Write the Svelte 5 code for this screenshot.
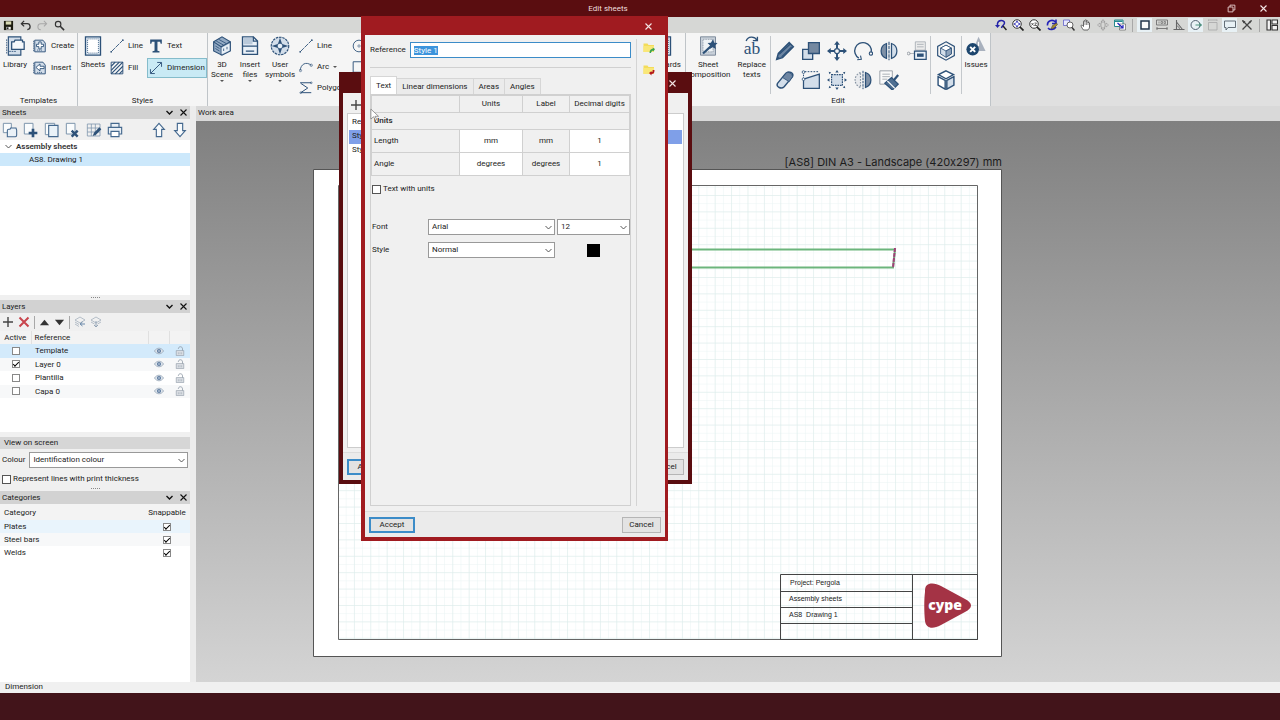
<script>
  import { onMount } from 'svelte';

  const N = '#2d5178';
  const L = '#d3deea';
  const s = (w = 1.6, c = N) => `fill="none" stroke="${c}" stroke-width="${w}"`;

  const icons = {
    library: `<path d="M4 1h15v22H4z" fill="${L}" stroke="${N}" stroke-width="1.4"/><path d="M2 4v17M5 18.500h9" ${s(1)} stroke-dasharray="2 1"/><path d="M8 7h3l1-2h9v2h2v9H8z" fill="#f5f8fb" stroke="${N}" stroke-width="1.500"/>`,
    create: `<path d="M3 2h14l4 5v15H3z" fill="${L}" stroke="${N}" stroke-width="1.600"/><path d="M1 3v18M7 19h9" ${s(1.4)} stroke-dasharray="2 1.200"/><path d="M10 5h4v4h4v4h-4v4h-4v-4H6V9h4z" fill="#fff" stroke="${N}" stroke-width="1.500"/>`,
    insert: `<path d="M3 2h14l4 5v15H3z" fill="${L}" stroke="${N}" stroke-width="1.600"/><path d="M1 3v18M7 19.500h9" ${s(1.4)} stroke-dasharray="2 1.200"/><path d="M5 11l7-6v4h7v4h-7v4z" fill="#fff" stroke="${N}" stroke-width="1.500"/>`,
    sheets: `<path d="M3 1h18v22H3z" fill="#e4eef7" stroke="${N}" stroke-width="1.600"/><path d="M5.500 3.500h13v17h-13z" fill="#fff" stroke="${N}" stroke-width="1" stroke-dasharray="1.200 1.200"/>`,
    line: `<path d="M2 22L21 3" ${s(1.5)} stroke-dasharray="9 1.500"/><circle cx="22" cy="2" r="1.500" fill="${N}"/><circle cx="2" cy="22" r="1.500" fill="${N}"/>`,
    fill: `<path d="M2 2h20v20H2z" ${s(1.6)}/><path d="M2 9l7-7M2 16L16 2M2 22L22 2M9 22L22 9M16 22l6-6" ${s(2)}/>`,
    text: `<path d="M2 1h20v7h-2l-1-3.500h-4.500V20l3.500 1v2H6v-2l3.500-1V4.500H5L4 8H2z" fill="${N}"/>`,
    dim: `<path d="M3 21L21 3M14 2.500h7.500V10M10 21.500H2.500V14" ${s(1.6)}/>`,
    scene: `<path d="M2 7l10-6 10 6v11l-10 5-10-5z" fill="#93aac4" stroke="${N}" stroke-width="1.400"/><path d="M2 7l9 6v10M11 13l11-6" ${s(1.3)}/><path d="M11.500 14L21 9v8.500L11.500 22z" fill="#e9f0f7"/><path d="M14 15v3M18 13v3M4 12l5 3M4 15l5 3M5 6l9 5M8 4l9 5" ${s(1)}/>`,
    files: `<path d="M3 1h13l5 5v16H3z" fill="#eaf1f8" stroke="${N}" stroke-width="1.600"/><path d="M4 2h11v8H4z" fill="#b9c9da"/><path d="M3 12h18M7 18h10M16 1v5h5" ${s(1.500)}/>`,
    symbols: `<circle cx="12" cy="12" r="10.500" fill="${L}" stroke="${N}" stroke-width="1.400" stroke-dasharray="3 1"/><path d="M12 2l2.500 7.500L22 12l-7.500 2.500L12 22l-2.500-7.500L2 12l7.500-2.500z" fill="${N}"/><circle cx="12" cy="12" r="3.400" fill="#e9f1f8" stroke="${N}"/>`,
    arc: `<path d="M2 18C3 7 12 2 21 9" ${s(1.500)}/><circle cx="2.500" cy="18" r="2" ${s(1)}/><circle cx="21" cy="9" r="2" ${s(1)}/>`,
    poly: `<path d="M2 3h19M3 4l12 8L3 20h18" ${s(1.700)}/><circle cx="21" cy="3" r="1.500" ${s(1)}/><circle cx="3" cy="20" r="1.500" ${s(1)}/>`,
    circle: `<circle cx="12" cy="12" r="10" ${s(1.500)}/><circle cx="12" cy="12" r="2" ${s(1)}/>`,
    rect: `<path d="M2 3h20v18H2z" ${s(1.600)}/>`,
    compose: `<path d="M3 1h18v22H3z" fill="#c8d0d9" stroke="#7e8b9c" stroke-width="1.200"/><path d="M6 4h12v15H6z" fill="#eef2f5" stroke="#7e8b9c" stroke-dasharray="1 1"/><path d="M6 21L17 11" ${s(2.600)}/><path d="M18 4l1.500 4 4 .5-3 3 1 4-4-2-3.500 2 .5-4-3-3 4-.5z" fill="${N}"/>`,
    replace: `<path d="M5 6c2-6 10-6 13-1M18.500 1v4.500H13" ${s(1.600)}/><text x="12" y="21" text-anchor="middle" font-family="Liberation Serif, serif" font-size="21" fill="${N}">ab</text>`,
    pencil: `<path d="M2 22l2-7L17 2l5 5L9 20z" fill="#6d86a3" stroke="${N}" stroke-width="1.800"/><path d="M5 16L18 4M8 19L20 7" ${s(1.500)}/><path d="M2 22l1-4 3 3z" fill="${N}"/>`,
    copy: `<path d="M2 10h12v12H2z" fill="${L}" stroke="${N}" stroke-width="1.600"/><path d="M9 2h13v13H9z" fill="#7488a0" stroke="${N}" stroke-width="1.600"/>`,
    move: `<path d="M12 0l3.500 4.500h-2.300v4h-2.400v-4H8.500zM12 24l3.500-4.500h-2.300v-4h-2.400v4H8.500zM0 12l4.500-3.500v2.300h4v2.400h-4v2.300zM24 12l-4.500-3.500v2.300h-4v2.400h4v2.300z" fill="${N}"/><circle cx="12" cy="12" r="3" fill="#f5f5f5" stroke="${N}" stroke-width="1.500"/>`,
    rotate: `<path d="M7 20.500A10 10 0 1 1 22 13" ${s(1.600)}/><circle cx="21.500" cy="15" r="2" fill="#f5f5f5" stroke="${N}" stroke-width="1.300"/><path d="M5 22.500l5-.5-1-4.500" ${s(1.300)}/>`,
    mirror: `<path d="M9 3a9.500 9.500 0 0 0 0 18z" fill="#7f91a7" stroke="${N}" stroke-width="1.500"/><path d="M15 3a9.500 9.500 0 0 1 0 18z" fill="${L}" stroke="${N}" stroke-width="1.500"/><path d="M12 1v22" ${s(1.300)} stroke-dasharray="4 1"/>`,
    link: `<path d="M10 1h12v10H10z" fill="#ececec" stroke="#a5abb2"/><path d="M12 4h8M12 7h8M3 15h7" ${s(1, '#a5abb2')}/><circle cx="2" cy="15" r="1.700" ${s(1, '#8a929b')}/><path d="M9 12h14v10H9z" fill="#eaf1f8" stroke="${N}" stroke-width="1.500"/><path d="M12 15h8v4h-8z" fill="${N}"/>`,
    eraser: `<path d="M3 16L13 4c2-2 4-2 6-1s3 3 2 5L11 20c-2 2-4 2-6 1s-3-3-2-5z" fill="${L}" stroke="${N}" stroke-width="1.700"/><path d="M9 9l8 5 4-6c0-2-3-6-7-5z" fill="#6e86a3" stroke="${N}"/>`,
    slope: `<path d="M3 11L22 5v17H3z" fill="${L}" stroke="${N}" stroke-width="1.500"/><path d="M3 11V2h19" ${s(1.200)} stroke-dasharray="2 1.500"/><circle cx="3" cy="2.500" r="1.600" fill="#fff" stroke="${N}"/><circle cx="3" cy="11" r="1.600" fill="#fff" stroke="${N}"/>`,
    scale: `<path d="M5.500 5.500h13v13h-13z" fill="${L}" stroke="${N}" stroke-width="1.400" stroke-dasharray="2 1"/><path d="M12 0l2 3h-4zM12 24l2-3h-4zM0 12l3-2v4zM24 12l-3-2v4zM2 2l3 1-2 2zM22 2l-3 1 2 2zM2 22l3-1-2-2zM22 22l-3-1 2-2z" fill="${N}"/>`,
    mirror2: `<path d="M9 3a9.500 9.500 0 0 0 0 18z" fill="#e8eaed" stroke="#8794a3" stroke-width="1.400" stroke-dasharray="2 1.500"/><path d="M15 3a9.500 9.500 0 0 1 0 18z" fill="#7f91a7" stroke="${N}" stroke-width="1.500"/><path d="M12 1v22" ${s(1.200)} stroke-dasharray="3 1"/>`,
    brush: `<path d="M1 1h15v16H1z" fill="#fafafa" stroke="#8d949c"/><path d="M4 5h9M4 8h9M4 11h6" ${s(1, '#9aa1a8')}/><path d="M7 16l8-7 8 8-7 7z" fill="#4f6f92" stroke="${N}" stroke-width="1.500"/><path d="M10 13l9 9" ${s(1.500, '#fff')}/><path d="M17 11l5-6 2 2-5 6z" fill="${N}"/>`,
    cubeHex: `<path d="M12 1l10 5.500v11L12 23 2 17.500v-11z" ${s(1.400)}/><path d="M12 5l6.500 3.500v7L12 19.500 5.500 15.500v-7z" fill="${L}" stroke="${N}"/><path d="M5.500 8.500L12 12l6.500-3.500L12 5z" fill="#fff" stroke="${N}"/><path d="M12 12l6.500-3.500v7L12 19.500z" fill="#8ea3bb" stroke="${N}"/>`,
    cube: `<path d="M12 1l9 4.500-9 5-9-5z" fill="#fff" stroke="${N}" stroke-width="1.700"/><path d="M2.500 8l8.500 4.500V23l-8.500-5z" fill="#fff" stroke="${N}" stroke-width="1.700"/><path d="M21.500 8L13 12.500V23l8.500-5z" fill="${L}" stroke="${N}" stroke-width="1.700"/>`,
    issues: `<path d="M15 1l8.500 17H8z" fill="#a9b1be"/><path d="M15 7v5" ${s(1.500, '#fff')}/><circle cx="8" cy="16" r="7.500" fill="#1d466e"/><path d="M5 13l6 6M11 13l-6 6" ${s(2.400, '#fff')}/>`,
    save: `<path d="M2 2h20v20H2z" fill="#1c1c10"/><path d="M6 3h12v7H6z" fill="#d9dbb4"/><path d="M7 15h10v6H7z" fill="#eee"/><path d="M8 16h4v4H8z" fill="#222"/>`,
    undo: `<path d="M9 2L3 8l6 6M3 8h12a6.500 6.500 0 0 1 1 13" ${s(2.800, '#333')}/>`,
    redo: `<path d="M15 2l6 6-6 6M21 8H9a6.500 6.500 0 0 0-1 13" ${s(2.200, '#a8a8a8')}/>`,
    find: `<circle cx="9" cy="9" r="6" ${s(2.500, '#333')}/><path d="M13 13l9 9" ${s(3.500, '#333')}/>`,
    zprev: `<path d="M5 14V9C6 1 19 1 19 8c0 4-5 5-6 10" ${s(3, '#2424a8')}/><path d="M0 12h10l-5 6z" fill="#2424a8"/><path d="M16 14l7 8" ${s(3, '#222')}/>`,
    zall: `<circle cx="10" cy="10" r="8.500" fill="#fff" stroke="#333" stroke-width="2"/><path d="M10 3l3 4H7zM10 17l3-4H7zM3 10l4-3v6zM17 10l-4-3v6z" fill="#2222b4"/><path d="M16 16l7 7" ${s(3.500, '#222')}/>`,
    zx2: `<circle cx="10" cy="10" r="8.500" fill="#fff" stroke="#333" stroke-width="2"/><path d="M5 8l4 5M9 8l-4 5M11 8h4l-4 5h5" ${s(1.600, '#444')}/><path d="M16 16l7 7" ${s(3.500, '#222')}/>`,
    redraw: `<path d="M3 13C2 3 13 0 19 6M20 1v8h-8" ${s(3.200, '#2424b8')}/><path d="M4 18c4 5 12 4 16-2" ${s(3, '#2424b8')}/><path d="M10 20l3-7 8-5 2 3-7 7z" fill="#a48a32" stroke="#333"/>`,
    zwin: `<path d="M1 2h12v11H1z" fill="#e8e8ff" stroke="#5a5ac8" stroke-width="1.500"/><circle cx="14" cy="12" r="6" fill="#fff" stroke="#555" stroke-width="1.800"/><path d="M18 17l5 6" ${s(3, '#333')}/>`,
    hand: `<path d="M7 22C3 17 1 13 3 12s3 3 4 3V5c0-2 3-2 3 0V3c0-2 3-2 3 0v2c0-2 3-2 3 0v3c0-2 3-1 3 0v8c0 3-2 4-3 6z" fill="#fff" stroke="#444" stroke-width="1.600"/><path d="M10 5v7M13 5v7M16 7v5" ${s(1.200, '#444')}/>`,
    orbit: `<path d="M12 1l4 5h-8zM12 23l4-5H8zM1 12l5-4v8zM23 12l-5-4v8z" fill="#eee" stroke="#999" stroke-width="1.500"/><ellipse cx="12" cy="12" rx="4" ry="9" ${s(1.300, '#999')}/>`,
    layers: `<path d="M1 2h17v13H1z" fill="#fff" stroke="#268a8e" stroke-width="2"/><path d="M2 3h15v3H2z" fill="#268a8e"/><path d="M11 10h12v12H11z" fill="#fff" stroke="#333"/><path d="M7 8l11 10M18 12v6h-6" ${s(2.400, '#2424b8')}/>`,
    square: `<path d="M4 4h16v16H4z" fill="#fafafa" stroke="#23344a" stroke-width="3"/>`,
    measure: `<path d="M1 2h22v10H1zM1 19h22M2 16v6M22 16v6" ${s(1.800, '#707070')}/><path d="M6 5v4M10 5h3v4h-3zM16 5h3v4h-3z" ${s(1.400, '#707070')}/>`,
    angle: `<path d="M7 2v19h16M7 6l12 15M1 21h6" ${s(2.200, '#666')}/><path d="M7 14c4 0 6 3 6 7" ${s(1.600, '#666')}/>`,
    target: `<circle cx="11" cy="12" r="9" ${s(2, '#536070')}/><path d="M11 12h12M18 8l5 4-5 4" ${s(1.800, '#39886f')}/>`,
    box: `<path d="M3 7h17v15H3zM3 2h17M3 1v3M20 1v3" ${s(1.700, '#aaa')}/>`,
    bubble: `<path d="M1 4h22v13H8l-4 5v-5H1z" ${s(1.800, '#56616b')}/>`,
    cross: `<path d="M3 3l18 18M21 3L3 21" ${s(2.600, '#444')}/><path d="M2 2l7 3-4 4zM22 2l-7 4 3 3z" fill="#444"/>`,
    panels: `<path d="M2 2h7v20H2zM12 2h11v8H12zM12 13h11v9H12z" fill="#f4f4f4" stroke="#333" stroke-width="2.200"/>`,
    sOpen: `<path d="M2 2h12v14H2z" fill="#fafcfd" stroke="#7e96ad" stroke-width="1.500"/><path d="M8 13c0-1 1-2 2-2h2l1-2h8l1 3v8c0 1-1 2-2 2H8z" fill="#eaf1f7" stroke="#44688e" stroke-width="1.600"/>`,
    sAdd: `<path d="M2 2h13v16H2z" fill="#fafcfd" stroke="#7e96ad" stroke-width="1.500"/><path d="M15 10v13M8.500 16.500h13" ${s(4)}/>`,
    sDup: `<path d="M2 2h14v17H2z" fill="#fafcfd" stroke="#7e96ad" stroke-width="1.500"/><path d="M7 5h14v17H7z" fill="#eaf2f8" stroke="#44688e" stroke-width="1.700"/>`,
    sDel: `<path d="M2 2h13v16H2z" fill="#fafcfd" stroke="#7e96ad" stroke-width="1.500"/><path d="M10 13l9 9M19 13l-9 9" ${s(3.600)}/>`,
    sEdit: `<path d="M2 3h19v18H2zM2 9h19M2 15h19M8 3v18M14 3v18" ${s(1.200, '#7e96ad')}/><path d="M10 21l2-5 8-8 3 3-8 8z" fill="${N}"/>`,
    print: `<path d="M6 8V2h12v6M2 8h20v10H2z" fill="#eaf0f6" stroke="#44688e" stroke-width="1.700"/><path d="M6 14h12v8H6z" fill="#fff" stroke="#44688e" stroke-width="1.700"/>`,
    up: `<path d="M12 2l8 9h-4v11H8V11H4z" fill="#f7fafc" stroke="#44688e" stroke-width="1.700"/>`,
    down: `<path d="M12 22l8-9h-4V2H8v11H4z" fill="#f7fafc" stroke="#44688e" stroke-width="1.700"/>`,
    plus: `<path d="M12 2v20M2 12h20" ${s(2.800, '#444')}/>`,
    redx: `<path d="M3 3l18 18M21 3L3 21" ${s(4, '#c8454d')}/>`,
    triUp: `<path d="M12 6l10 12H2z" fill="#333"/>`,
    triDown: `<path d="M12 18l10-12H2z" fill="#333"/>`,
    stackL: `<path d="M2 8l10-6 10 6-10 6zM2 12l8 5M2 16l8 5" ${s(1.300, '#94a3b2')}/><path d="M22 16h-8M17 12l-5 4 5 4" ${s(1.800, '#5b7ea2')}/>`,
    stackD: `<path d="M2 8l10-6 10 6-10 6zM2 12l7 4M22 12l-7 4" ${s(1.300, '#94a3b2')}/><path d="M12 10v11M8 18l4 4 4-4" ${s(1.600, '#7f93a8')}/>`,
    eye: `<path d="M1 12c6-9 16-9 22 0-6 9-16 9-22 0z" fill="#dfe6ed" stroke="#8395a8" stroke-width="1.500"/><circle cx="12" cy="12" r="5" fill="#5e7ca0"/><circle cx="12" cy="12" r="1.800" fill="#e8eef4"/>`,
    lock: `<path d="M3 11h18v12H3z" fill="#dde1e6" stroke="#8d98a5" stroke-width="1.500"/><path d="M8 7c0-7 10-7 10 0v4" ${s(1.900, '#8d98a5')}/><path d="M8 15v5M12 15v5M16 15v5" ${s(1.200, '#8d98a5')}/>`,
    chev: `<path d="M4 8l8 8 8-8" ${s(3.600, '#111')}/>`,
    chevThin: `<path d="M4 8l8 8 8-8" ${s(2.400, '#444')}/>`,
    close: `<path d="M4 4l16 16M20 4L4 20" ${s(3, '#111')}/>`,
    closeW: `<path d="M4 4l16 16M20 4L4 20" ${s(3, '#f3e4e4')}/>`,
    restore: `<path d="M3 8h13v13H3zM8 8V3h13v13h-5" ${s(2.400, '#e6cfcf')}/>`,
    folderIn: `<path d="M1 3h8l2 3h11v14H1z" fill="#f3dc5a"/><path d="M1 8h21v12H1z" fill="#f9e778"/><path d="M13 22c0-6 3-8 7-9l-1-2 5 3-3 5-1-2c-2 1-4 3-4 5z" fill="#3ba24c"/>`,
    folderOut: `<path d="M1 3h8l2 3h11v14H1z" fill="#f3dc5a"/><path d="M1 8h21v12H1z" fill="#f9e778"/><path d="M23 12c0 6-2 8-6 8v3l-5-5 5-4v2c2 0 3-1 2-4z" fill="#b3181d"/>`
  };

  const quick = ['save', 'undo', 'redo', 'find'];
  const zoomTools = ['zprev', 'zall', 'zx2', 'redraw', 'zwin', 'hand', 'orbit', 'layers'];
  const viewTools = [
    ['square', true], ['measure', false], ['angle', false], ['target', true],
    ['box', false], ['bubble', true], ['cross', false]
  ];
  const editTools = ['pencil', 'copy', 'move', 'rotate', 'mirror', 'link', 'eraser', 'slope', 'scale', 'mirror2', 'brush'];
  const sheetTools = ['sOpen', 'sAdd', 'sDup', 'sDel', 'sEdit', 'print'];

  let layers = $state([
    { name: 'Template', active: false },
    { name: 'Layer 0', active: true },
    { name: 'Plantilla', active: false },
    { name: 'Capa 0', active: false }
  ]);
  let categories = $state([
    { name: 'Plates', snap: true },
    { name: 'Steel bars', snap: true },
    { name: 'Welds', snap: true }
  ]);
  let styleName = $state('Style 1');
  let nameInput;
  onMount(() => {
    nameInput.focus();
    nameInput.select();
  });
</script>

{#snippet ic(name, w = 16, h = w)}
  <svg viewBox="0 0 24 24" width={w} height={h} aria-hidden="true">{@html icons[name]}</svg>
{/snippet}

{#snippet big(name, a, b, caret)}
  <button class="big">
    {@render ic(name, 20)}
    <span>{a}</span>
    {#if b}<span>{b}</span>{/if}
    {#if caret}<i class="caret"></i>{/if}
  </button>
{/snippet}

{#snippet small(name, label, on = false)}
  <button class="small" class:on>{@render ic(name, 14)}<span>{label}</span></button>
{/snippet}

{#snippet head(title)}
  <header class="panel-head">
    <h2>{title}</h2>
    <button aria-label="Collapse {title}">{@render ic('chev', 9)}</button>
    <button aria-label="Close {title}">{@render ic('close', 9)}</button>
  </header>
{/snippet}

<div class="app">
  <header class="titlebar">
    <h1>Edit sheets</h1>
    <div class="win">
      <button aria-label="Restore">{@render ic('restore', 9)}</button>
      <button aria-label="Close window">{@render ic('closeW', 9)}</button>
    </div>
  </header>

  <div class="quickbar">
    <div class="quick">
      {#each quick as q}<button aria-label={q}>{@render ic(q, 11)}</button>{/each}
    </div>
    <div class="tools">
      {#each zoomTools as t}<button aria-label={t}>{@render ic(t, 12)}</button>{/each}
      <i class="vsep"></i>
      {#each viewTools as [t, on]}<button class:on aria-label={t}>{@render ic(t, 12)}</button>{/each}
      <i class="vsep"></i>
      <button aria-label="Panels">{@render ic('panels', 12)}</button>
    </div>
  </div>

  <nav class="ribbon">
    <section class="group g-templates">
      <div class="body">
        {@render big('library', 'Library')}
        <div class="rows">{@render small('create', 'Create')}{@render small('insert', 'Insert')}</div>
      </div>
      <h3>Templates</h3>
    </section>
    <section class="group g-styles">
      <div class="body">
        {@render big('sheets', 'Sheets')}
        <div class="rows">{@render small('line', 'Line')}{@render small('fill', 'Fill')}</div>
        <div class="rows">{@render small('text', 'Text')}{@render small('dim', 'Dimension', true)}</div>
      </div>
      <h3>Styles</h3>
    </section>
    <section class="group g-draw">
      <div class="body">
        {@render big('scene', '3D', 'Scene', true)}
        {@render big('files', 'Insert', 'files', true)}
        {@render big('symbols', 'User', 'symbols', true)}
        <div class="rows three">
          {@render small('line', 'Line')}
          <button class="small">{@render ic('arc', 14)}<span>Arc</span><i class="caret"></i></button>
          {@render small('poly', 'Polygon')}
        </div>
        <div class="rows three">{@render small('circle', '')}{@render small('rect', '')}</div>
        <div class="push">{@render big('sheets', 'Standards')}</div>
      </div>
    </section>
    <section class="group g-edit">
      <div class="body">
        <div class="part p-texts">{@render big('compose', 'Sheet', 'composition')}{@render big('replace', 'Replace', 'texts')}</div>
        <div class="part grid">
          {#each editTools as t}<button aria-label={t}>{@render ic(t, 20)}</button>{/each}
        </div>
        <div class="part cubes">
          <button aria-label="3D view">{@render ic('cubeHex', 20)}</button>
          <button aria-label="Solid view">{@render ic('cube', 20)}</button>
        </div>
        <div class="part p-issues">{@render big('issues', 'Issues')}</div>
      </div>
      <h3>Edit</h3>
    </section>
  </nav>

  <main class="workspace">
    <aside class="sidebar">
      <section class="p-sheets">
        {@render head('Sheets')}
        <div class="sheet-tools">
          {#each sheetTools as t}<button aria-label={t}>{@render ic(t, 16)}</button>{/each}
          <span class="grow"></span>
          <button aria-label="Move up">{@render ic('up', 16)}</button>
          <button aria-label="Move down">{@render ic('down', 16)}</button>
        </div>
        <ul class="tree">
          <li class="root">{@render ic('chevThin', 9)}Assembly sheets</li>
          <li class="leaf">AS8. Drawing 1</li>
        </ul>
      </section>
      <div class="grip"></div>
      <section class="p-layers">
        {@render head('Layers')}
        <div class="layer-tools">
          <button aria-label="Add layer">{@render ic('plus', 12)}</button>
          <button aria-label="Delete layer">{@render ic('redx', 12)}</button>
          <i class="vsep"></i>
          <button aria-label="Layer up">{@render ic('triUp', 11)}</button>
          <button aria-label="Layer down">{@render ic('triDown', 11)}</button>
          <i class="vsep"></i>
          <button aria-label="Assign layer">{@render ic('stackL', 12)}</button>
          <button aria-label="Merge layer">{@render ic('stackD', 12)}</button>
        </div>
        <div class="list">
          <table class="layers">
            <thead><tr><th>Active</th><th>Reference</th><th></th><th></th></tr></thead>
            <tbody>
              {#each layers as l, i}
                <tr class:sel={i === 0}>
                  <td><input type="checkbox" bind:checked={l.active} aria-label="{l.name} active" /></td>
                  <td>{l.name}</td>
                  <td>{@render ic('eye', 10)}</td>
                  <td>{@render ic('lock', 10)}</td>
                </tr>
              {/each}
            </tbody>
          </table>
        </div>
      </section>
      <section class="p-view">
        <h2 class="plain">View on screen</h2>
        <div class="field">
          <label for="colour">Colour</label>
          <span class="select"><select id="colour"><option>Identification colour</option></select>{@render ic('chevThin', 9)}</span>
        </div>
        <label class="check"><input type="checkbox" />Represent lines with print thickness</label>
      </section>
      <div class="grip thin"></div>
      <section class="p-cats">
        {@render head('Categories')}
        <div class="list">
          <table class="cats">
            <thead><tr><th>Category</th><th>Snappable</th></tr></thead>
            <tbody>
              {#each categories as c, i}
                <tr class:sel={i === 0}>
                  <td>{c.name}</td>
                  <td><input type="checkbox" bind:checked={c.snap} aria-label="{c.name} snappable" /></td>
                </tr>
              {/each}
            </tbody>
          </table>
        </div>
      </section>
    </aside>

    <section class="work">
      <h2>Work area</h2>
      <div class="canvas">
        <svg class="paper" viewBox="0 0 690 507" width="690" height="507" role="img" aria-label="Sheet AS8">
          <defs>
            <pattern id="minor" width="8.2" height="8.2" patternUnits="userSpaceOnUse" x="24.500" y="3">
              <path d="M0 0H8.200M0 0V8.200" stroke="#eaf4f4" fill="none" />
            </pattern>
            <pattern id="major" width="16.400" height="16.400" patternUnits="userSpaceOnUse" x="24.500" y="11.200">
              <path d="M0 0H16.400M0 0V16.400" stroke="#dcebea" fill="none" />
            </pattern>
          </defs>
          <text x="689" y="15" text-anchor="end" class="sheet-title">[AS8] DIN A3 - Landscape (420x297) mm</text>
          <path d="M.5 18.500h688v487H.5z" fill="#fff" stroke="#555" />
          <path d="M25.500 34.500h639v454h-639z" fill="url(#minor)" />
          <path d="M25.500 34.500h639v454h-639z" fill="url(#major)" stroke="#666" />
          <path d="M300 98.500h282l-2 18H300" fill="#fff" fill-opacity=".5" stroke="#6cb57c" stroke-width="2" />
          <path d="M582 97l-2 20" stroke="#a23f78" stroke-width="2" stroke-dasharray="4 1" />
          <path d="M467.500 423.500h197v65h-197zM599.500 423.500v65M467.500 440.500h132M467.500 456.500h132M467.500 472.500h132" fill="none" stroke="#444" />
          <g class="block">
            <text x="477" y="434">Project: Pergola</text>
            <text x="476" y="450">Assembly sheets</text>
            <text x="476" y="466">AS8&nbsp; Drawing 1</text>
          </g>
          <path d="M616 433c4-1 8 0 12 2l24 13c8 4 8 9 0 13l-24 13c-9 5-15 3-16-4-1-9-1-22 0-29 0-5 1-7 4-8z" fill="#a43345" />
          <text x="632" y="459" text-anchor="middle" class="logo">cype</text>
        </svg>
      </div>
    </section>

    <div class="dialog back" role="dialog" aria-label="Styles">
      <header><button aria-label="Close styles">{@render ic('closeW', 9)}</button></header>
      <div class="back-body">
        <button class="add" aria-label="Add style">{@render ic('plus', 12)}</button>
        <ul><li class="hd">Reference</li><li class="sel">Style 1</li><li>Style 2</li></ul>
      </div>
      <footer><button class="btn primary">Accept</button><button class="btn">Cancel</button></footer>
    </div>

    <div class="dialog front" role="dialog" aria-label="Dimension style">
      <header><button aria-label="Close dialog">{@render ic('closeW', 9)}</button></header>
      <div class="front-body">
        <div class="form">
          <div class="ref">
            <label for="ref">Reference</label>
            <input id="ref" type="text" bind:value={styleName} bind:this={nameInput} />
          </div>
          <div class="tabs" role="tablist">
            <button role="tab" aria-selected="true" class="active">Text</button>
            <button role="tab" aria-selected="false">Linear dimensions</button>
            <button role="tab" aria-selected="false">Areas</button>
            <button role="tab" aria-selected="false">Angles</button>
          </div>
          <div class="pane">
            <table class="units">
              <thead><tr><th></th><th>Units</th><th>Label</th><th>Decimal digits</th></tr></thead>
              <tbody>
                <tr class="sub"><th colspan="4">Units</th></tr>
                <tr><th>Length</th><td>mm</td><td class="ro">mm</td><td>1</td></tr>
                <tr><th>Angle</th><td>degrees</td><td class="ro">degrees</td><td>1</td></tr>
              </tbody>
            </table>
            <label class="check"><input type="checkbox" />Text with units</label>
            <div class="fonts">
              <label for="font">Font</label>
              <span class="select"><select id="font"><option>Arial</option></select>{@render ic('chevThin', 9)}</span>
              <span class="select"><select aria-label="Font size"><option>12</option></select>{@render ic('chevThin', 9)}</span>
              <label for="fstyle">Style</label>
              <span class="select"><select id="fstyle"><option>Normal</option></select>{@render ic('chevThin', 9)}</span>
              <button class="swatch" aria-label="Text colour"></button>
            </div>
          </div>
        </div>
        <div class="side">
          <button aria-label="Import">{@render ic('folderIn', 12)}</button>
          <button aria-label="Export">{@render ic('folderOut', 12)}</button>
        </div>
      </div>
      <footer><button class="btn primary">Accept</button><button class="btn">Cancel</button></footer>
      <svg class="cursor" viewBox="0 0 10 14" width="9" height="13" aria-hidden="true"><path d="M1 1v11l3-2.500 2 4 1.500-1-2-3.500h4z" fill="#fff" stroke="#777" stroke-width=".8" /></svg>
    </div>
  </main>

  <footer class="status">Dimension</footer>
  <div class="bottom"></div>
</div>

<style>
  :global(body) { background: #42141a; }
  .app {
    display: flex; flex-direction: column; min-height: 100vh; overflow: hidden;
    font: 8px/12px Roboto, "Noto Sans", sans-serif; color: #1c1c1c; background: #d6d6d6;
  }
  .app *, .app *::before { box-sizing: border-box; }
  svg { display: block; flex: none; }
  button { border: 0; padding: 0; margin: 0; background: none; font: inherit; color: inherit; display: flex; align-items: center; justify-content: center; }
  h1, h2, h3, ul { margin: 0; padding: 0; font: inherit; list-style: none; }
  input, select { font: inherit; color: inherit; margin: 0; }

  .titlebar { height: 17px; flex: none; background: #5a0d10; color: #eedede; display: grid; grid-template-columns: 1fr auto 1fr; align-items: center; }
  .titlebar h1 { grid-column: 2; margin-right: 64px; }
  .win { display: flex; justify-content: flex-end; gap: 23px; padding-right: 12px; }

  .quickbar { height: 16px; flex: none; display: flex; justify-content: space-between; background: #d6d7d5; }
  .quick { display: flex; gap: 6px; padding-left: 3px; }
  .tools { display: flex; align-items: center; }
  .tools button { width: 17px; height: 14px; }
  .tools button.on { background: #e8f1f5; border: 1px solid #d6d7d5; border-width: 0 1px; }
  .vsep { width: 1px; height: 13px; margin: 0 3px; background: #a8a8a8; flex: none; }
  .tools .vsep { margin: 0 3px 0 4px; }

  .ribbon { height: 73px; flex: none; display: flex; background: #e0e0e0; }
  .group { display: flex; flex-direction: column; background: #f5f5f5; border-right: 1px solid #bfc4c8; flex: none; }
  .group .body { flex: 1; display: flex; align-items: flex-start; padding-top: 3px; }
  .group h3 { text-align: center; height: 12px; line-height: 14px; }
  .g-templates { width: 78px; }
  .g-styles { width: 130px; }
  .g-draw { width: 478px; }
  .g-edit { width: 305px; }
  .big { flex-direction: column; justify-content: flex-start; line-height: 10px; min-width: 26px; }
  .big svg { margin-bottom: 4px; }
  .big span { white-space: nowrap; }
  .caret { border: 2px solid transparent; border-top-color: #555; border-bottom: 0; }
  .rows { display: flex; flex-direction: column; gap: 2px; align-items: stretch; }
  .small { height: 20px; gap: 4px; justify-content: flex-start; padding: 0 2px; white-space: nowrap; }
  .small.on { background: #c9eaf5; outline: 1px solid #85bccb; outline-offset: -1px; }
  .rows.three { gap: 1px; }
  .g-templates .body { padding-left: 2px; gap: 3px; }
  .g-styles .body { padding-left: 2px; gap: 2px; }
  .g-draw .body { padding-left: 1px; gap: 2px; }
  .push { margin-left: auto; padding-right: 4px; }
  .part { display: flex; height: 58px; border-right: 1px solid #c4c8cc; }
  .p-texts { width: 85px; justify-content: space-between; padding-right: 4px; }
  .part.grid { width: 160px; display: grid; grid-template-columns: repeat(5, 26px) 30px; grid-template-rows: 29px 29px; padding-left: 1px; }
  .part.cubes { width: 31px; flex-direction: column; }
  .part.cubes button { height: 29px; }
  .p-issues { flex: 1; justify-content: center; border: 0; }

  .workspace { flex: 1; display: flex; position: relative; background: #ececec; }
  .sidebar { width: 190px; flex: none; display: flex; flex-direction: column; background: #f0f0f0; }
  .panel-head { display: flex; align-items: center; height: 13px; gap: 5px; padding: 0 2px; background: #d2d2d2; }
  .panel-head h2 { flex: 1; }
  .sheet-tools { display: flex; align-items: center; gap: 5px; height: 21px; padding: 0 2px; }
  .grow { flex: 1; }
  .tree { height: 155px; background: #fff; }
  .tree li { display: flex; align-items: center; height: 13px; }
  .tree .root { gap: 3px; padding-left: 4px; color: #333; font-weight: 600; }
  .tree .leaf { padding-left: 29px; background: #cce8fb; }
  .grip { height: 5px; display: grid; place-items: center; }
  .grip::before { content: ""; width: 9px; border-top: 1px dotted #888; }
  .p-layers { height: 132px; display: flex; flex-direction: column; flex: none; }
  .layer-tools { display: flex; align-items: center; gap: 4px; height: 18px; padding-left: 2px; flex: none; }
  .layer-tools .vsep { margin: 0; }
  .list { flex: 1; background: #fff; }
  table { border-collapse: collapse; width: 100%; table-layout: fixed; }
  th { font-weight: 400; text-align: left; }
  .sidebar th, .sidebar td { height: 13px; padding: 0; line-height: 13px; }
  .sidebar thead { background: #f3f3f3; }
  .layers { height: 67px; }
  .layers th:first-child, .layers td:first-child { width: 31px; text-align: center; }
  .layers th:nth-child(2) { padding-left: 3px; border-left: 1px solid #e0e0e0; }
  .layers td:nth-child(2) { padding-left: 4px; }
  .layers th:nth-child(3) { width: 21px; border-left: 1px solid #e0e0e0; }
  .layers th:nth-child(4) { width: 21px; border-left: 1px solid #e0e0e0; }
  .layers td svg { margin: 0 auto; }
  .sel { background: #d3eafb; }
  .cats .sel { background: #e9f4fc; }
  .sidebar tbody tr:nth-child(even) { background: #f7f8f9; }
  .cats th, .cats td { padding-left: 4px; }
  .sidebar .cats th { height: 16px; }
  .cats th:last-child, .cats td:last-child { width: 46px; text-align: center; padding: 0; }
  input[type="checkbox"] { appearance: none; width: 9px; height: 9px; flex: none; border: 1px solid #555; background: #fff; display: block; }
  td input[type="checkbox"] { width: 8px; height: 8px; margin: 0 auto; border-color: #888; }
  input[type="checkbox"]:checked::before { content: ""; display: block; width: 6px; height: 3px; margin: 1px 0 0; border: solid #000; border-width: 0 0 1px 1px; transform: rotate(-45deg); }
  .p-view { padding-top: 5px; }
  .plain { height: 12px; background: #d6d6d6; padding-left: 4px; }
  .field { display: flex; align-items: center; gap: 4px; padding: 3px 2px 0 2px; }
  .check { display: flex; align-items: center; gap: 2px; }
  .p-view .check { padding: 5px 0 0 2px; }
  .grip.thin { height: 6px; }
  .select { display: grid; align-items: center; flex: 1; min-width: 0; }
  .select select { grid-area: 1/1; appearance: none; width: 100%; height: 16px; border: 1px solid #999; border-radius: 0; background: #fff; padding: 0 3px; }
  .select svg { grid-area: 1/1; justify-self: end; margin-right: 2px; pointer-events: none; }
  .p-cats { flex: 1; display: flex; flex-direction: column; }

  .work { flex: 1; display: flex; flex-direction: column; margin-left: 6px; min-width: 0; }
  .work h2 { height: 15px; background: #d9d9d9; padding-left: 2px; line-height: 13px; }
  .canvas { flex: 1; position: relative; overflow: hidden; background: linear-gradient(#808080, #d4d4d4); }
  .paper { position: absolute; left: 117px; top: 30px; }
  .sheet-title { font: 11px Inter, "Noto Sans", sans-serif; font-feature-settings: "calt" 0; fill: #1c1c1c; }
  .block { font: 7px "Liberation Sans", sans-serif; fill: #222; }
  .logo { font: 800 14px "Open Sans", sans-serif; fill: #fff; }

  .dialog { position: absolute; display: flex; flex-direction: column; background: #f0f0f0; }
  .dialog header { display: flex; justify-content: flex-end; align-items: center; height: 18px; }
  .dialog footer { display: flex; justify-content: space-between; align-items: center; background: #ebebeb; border-top: 1px solid #dcdcdc; }
  .btn { height: 16px; min-width: 39px; border: 1px solid #b5b5b5; background: #e3e3e3; }
  .btn.primary { min-width: 46px; border: 2px solid #3c8cc8; }
  .back { left: 339px; top: -34px; width: 353px; height: 412px; border: solid #5a0d10; border-width: 1px 4px 4px; }
  .back header { background: #5a0d10; padding-right: 11px; height: 20px; }
  .back-body { flex: 1; display: flex; flex-direction: column; padding: 5px 4px 4px; }
  .back-body .add { width: 16px; height: 14px; padding-left: 2px; margin-bottom: 1px; }
  .back ul { flex: 1; background: #fff; border: 1px solid #ccc; padding: 2px 1px; }
  .back li { height: 14px; padding-left: 3px; }
  .back li.sel { background: #7f9fe8; }
  .back footer { height: 28px; padding: 0 4px; }
  .front { left: 361px; top: -90px; width: 307px; height: 525px; border: solid #a01b20; border-width: 1px 3px 4px 4px; }
  .front header { background: #a01b20; padding-right: 12px; }
  .front-body { flex: 1; display: flex; padding: 4px 4px 5px 5px; }
  .form { flex: 1; display: flex; flex-direction: column; }
  .ref { display: flex; align-items: center; gap: 4px; padding: 3px 0 9px; border-bottom: 1px solid #d0d0d0; }
  .ref input { flex: 1; min-width: 0; height: 16px; border: 1px solid #3c8cc8; padding: 0 3px; background: #fff; outline: 0; border-radius: 0; }
  .ref input::selection { background: #3d94dc; color: #fff; }
  .tabs { display: flex; align-items: flex-end; margin-top: 8px; }
  .tabs button { height: 16px; padding: 0 5px; border: 1px solid #d6d6d6; border-width: 1px 1px 0 0; background: #ebebeb; }
  .tabs .active { height: 18px; padding: 0 5px; background: #fff; border-left-width: 1px; }
  .pane { flex: 1; border: 1px solid #d0d0d0; }
  .units { border: 1px solid #bdbdbd; text-align: center; }
  .units th, .units td { border: 1px solid #d0d0d0; height: 23px; padding: 0 2px; }
  .units thead th { height: 17px; text-align: center; padding: 0; }
  .units .sub th { height: 17px; color: #333; font-weight: 600; }
  .units thead th:nth-child(1) { width: 88px; }
  .units thead th:nth-child(2) { width: 63px; }
  .units thead th:nth-child(3) { width: 47px; }
  .units td { background: #fff; }
  .units .ro { background: #f0f0f0; }
  .pane .check { padding: 7px 0 0 1px; }
  .fonts { display: grid; grid-template-columns: 54px 127px 73px; column-gap: 2px; row-gap: 7px; align-items: center; padding: 24px 0 0 1px; }
  .swatch { width: 13px; height: 13px; background: #000; margin-left: 30px; }
  .side { margin-left: 5px; width: 27px; display: flex; flex-direction: column; align-items: center; gap: 10px; padding-top: 3px; border-left: 1px solid #d4d4d4; }
  .front footer { height: 26px; padding: 0 4px; }
  .cursor { position: absolute; left: 5px; top: 91px; }

  .status { height: 11px; flex: none; padding-left: 5px; line-height: 10px; background: #f0f0f0; }
  .bottom { height: 27px; flex: none; background: #42141a; }
</style>
